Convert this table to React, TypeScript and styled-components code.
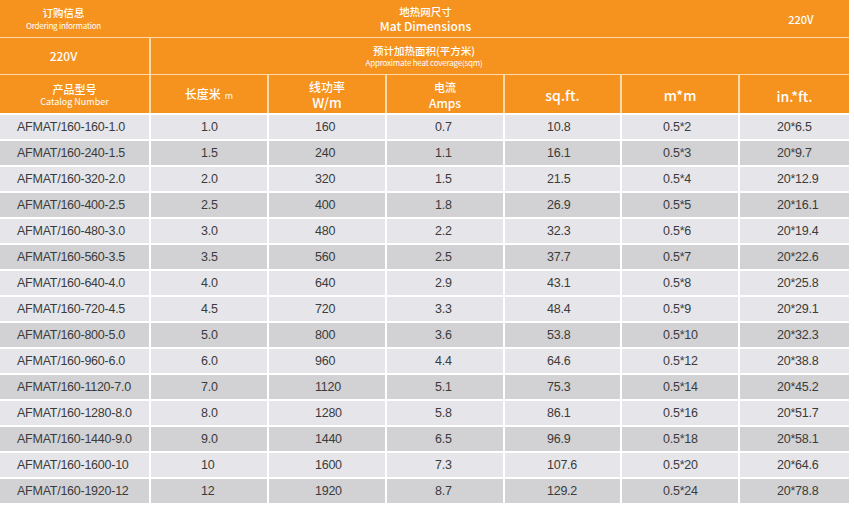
import React from "react";
import styled, { createGlobalStyle } from "styled-components";

const ORANGE = "#f6921e";
const LINE = "#fcd9ab";
const CJK = `"Noto Sans CJK SC", "Noto Sans", sans-serif`;

const Global = createGlobalStyle`
  html, body { margin: 0; padding: 0; background: #ffffff; }
  body { font-family: ${CJK}; }
`;

const COLS = "149px 116px 116px 116px 115px 116px 109px";

type Col = { pad: number };
const columns: Col[] = [
  { pad: 17 },
  { pad: 50 },
  { pad: 46 },
  { pad: 48 },
  { pad: 42 },
  { pad: 41 },
  { pad: 37 },
];

const DARK_ROWS = new Set([1, 3, 5, 8, 10, 12, 14]);

const rows: { cells: string[]; dark: boolean }[] = [
  ["AFMAT/160-160-1.0", "1.0", "160", "0.7", "10.8", "0.5*2", "20*6.5"],
  ["AFMAT/160-240-1.5", "1.5", "240", "1.1", "16.1", "0.5*3", "20*9.7"],
  ["AFMAT/160-320-2.0", "2.0", "320", "1.5", "21.5", "0.5*4", "20*12.9"],
  ["AFMAT/160-400-2.5", "2.5", "400", "1.8", "26.9", "0.5*5", "20*16.1"],
  ["AFMAT/160-480-3.0", "3.0", "480", "2.2", "32.3", "0.5*6", "20*19.4"],
  ["AFMAT/160-560-3.5", "3.5", "560", "2.5", "37.7", "0.5*7", "20*22.6"],
  ["AFMAT/160-640-4.0", "4.0", "640", "2.9", "43.1", "0.5*8", "20*25.8"],
  ["AFMAT/160-720-4.5", "4.5", "720", "3.3", "48.4", "0.5*9", "20*29.1"],
  ["AFMAT/160-800-5.0", "5.0", "800", "3.6", "53.8", "0.5*10", "20*32.3"],
  ["AFMAT/160-960-6.0", "6.0", "960", "4.4", "64.6", "0.5*12", "20*38.8"],
  ["AFMAT/160-1120-7.0", "7.0", "1120", "5.1", "75.3", "0.5*14", "20*45.2"],
  ["AFMAT/160-1280-8.0", "8.0", "1280", "5.8", "86.1", "0.5*16", "20*51.7"],
  ["AFMAT/160-1440-9.0", "9.0", "1440", "6.5", "96.9", "0.5*18", "20*58.1"],
  ["AFMAT/160-1600-10", "10", "1600", "7.3", "107.6", "0.5*20", "20*64.6"],
  ["AFMAT/160-1920-12", "12", "1920", "8.7", "129.2", "0.5*24", "20*78.8"],
].map((cells, i) => ({ cells, dark: DARK_ROWS.has(i) }));

const Table = styled.div`
  width: 849px;
  display: flex;
  flex-direction: column;
`;

const TopRow = styled.div`
  display: grid;
  grid-template-columns: 151px 1fr 109px;
  height: 37px;
  background: ${ORANGE};
  border-bottom: 1px solid ${LINE};
`;

const MidRow = styled.div`
  display: grid;
  grid-template-columns: 149px 1fr;
  column-gap: 2px;
  height: 36px;
  background: ${LINE};
  border-bottom: 1px solid ${LINE};
`;

const ColRow = styled.div`
  display: grid;
  grid-template-columns: ${COLS};
  column-gap: 2px;
  height: 38px;
  background: ${LINE};
`;

const HeadCell = styled.div<{ $pl?: number; $pr?: number; $pt?: number }>`
  background: ${ORANGE};
  display: flex;
  flex-direction: column;
  align-items: center;
  justify-content: center;
  color: #ffffff;
  padding-left: ${(p) => p.$pl ?? 0}px;
  padding-right: ${(p) => p.$pr ?? 0}px;
  padding-top: ${(p) => p.$pt ?? 0}px;
  font-family: ${CJK};
  white-space: nowrap;
`;

const Label = styled.span<{ $size: number; $lh: number; $weight?: number; $ls?: number }>`
  display: block;
  font-size: ${(p) => p.$size}px;
  line-height: ${(p) => p.$lh}px;
  font-weight: ${(p) => p.$weight ?? 400};
  letter-spacing: ${(p) => p.$ls ?? 0}px;
`;

const Inline = styled.div`
  display: flex;
  align-items: baseline;
  gap: 4px;
`;

const Body = styled.div`
  display: grid;
  grid-template-columns: ${COLS};
  column-gap: 2px;
  row-gap: 2px;
  padding-top: 2px;
  background: #ffffff;
`;

const Cell = styled.div<{ $dark: boolean; $pad: number }>`
  height: 24px;
  display: flex;
  align-items: center;
  padding-left: ${(p) => p.$pad}px;
  background: ${(p) => (p.$dark ? "#d2d2d4" : "#e6e6ea")};
  color: #3b3b3b;
  font-family: "Liberation Sans", Arial, sans-serif;
  font-size: 12.5px;
  letter-spacing: -0.25px;
  white-space: nowrap;
`;

export default function App() {
  return (
    <>
      <Global />
      <Table>
        <TopRow>
          <HeadCell $pr={24}>
            <Label $size={10.5} $lh={14} $weight={500}>订购信息</Label>
            <Label $size={8} $lh={11} $ls={-0.2}>Ordering information</Label>
          </HeadCell>
          <HeadCell $pr={40}>
            <Label $size={10.5} $lh={14} $weight={500}>地热网尺寸</Label>
            <Label $size={12} $lh={13} $weight={500}>Mat Dimensions</Label>
          </HeadCell>
          <HeadCell $pl={13}>
            <Label $size={11} $lh={14} $weight={500}>220V</Label>
          </HeadCell>
        </TopRow>
        <MidRow>
          <HeadCell $pr={22}>
            <Label $size={12} $lh={14} $weight={500}>220V</Label>
          </HeadCell>
          <HeadCell $pr={152}>
            <Label $size={10.5} $lh={14} $weight={500}>预计加热面积(平方米)</Label>
            <Label $size={8} $lh={10} $ls={-0.2}>Approximate heat coverage(sqm)</Label>
          </HeadCell>
        </MidRow>
        <ColRow>
          <HeadCell>
            <Label $size={11} $lh={14} $weight={500}>产品型号</Label>
            <Label $size={9} $lh={11}>Catalog Number</Label>
          </HeadCell>
          <HeadCell>
            <Inline>
              <Label $size={12} $lh={15} $weight={500}>长度米</Label>
              <Label $size={9} $lh={15}>m</Label>
            </Inline>
          </HeadCell>
          <HeadCell>
            <Label $size={12} $lh={16} $weight={500}>线功率</Label>
            <Label $size={13.5} $lh={15} $weight={500}>W/m</Label>
          </HeadCell>
          <HeadCell>
            <Label $size={11} $lh={16} $weight={500}>电流</Label>
            <Label $size={12} $lh={15} $weight={500}>Amps</Label>
          </HeadCell>
          <HeadCell $pt={2}>
            <Label $size={14} $lh={16} $weight={500}>sq.ft.</Label>
          </HeadCell>
          <HeadCell $pt={2}>
            <Label $size={14} $lh={16} $weight={500}>m*m</Label>
          </HeadCell>
          <HeadCell $pt={3}>
            <Label $size={14} $lh={16} $weight={500}>in.*ft.</Label>
          </HeadCell>
        </ColRow>
        <Body>
          {rows.map((row, ri) =>
            row.cells.map((text, ci) => (
              <Cell key={`${ri}-${ci}`} $dark={row.dark} $pad={columns[ci].pad}>
                {text}
              </Cell>
            ))
          )}
        </Body>
      </Table>
    </>
  );
}
